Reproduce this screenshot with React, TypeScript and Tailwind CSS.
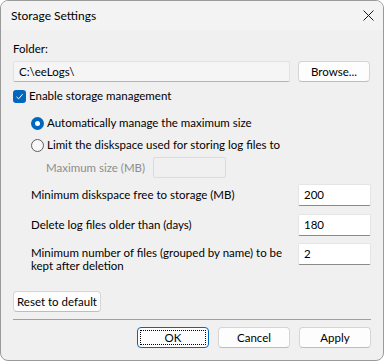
import { useState } from "react";

const font = { fontFamily: 'Lato, "Noto Sans", sans-serif' };

function Button({ label, focus, className }: { label: string; focus?: boolean; className?: string }) {
    return (
        <button
            className={`h-[21px] shrink-0 whitespace-nowrap rounded-[4px] bg-[#fdfdfd] text-[11.5px] leading-none text-black flex items-center justify-center ${focus ? "border border-[#0067c0]" : "border border-[#d5d5d5] border-b-[#bdbdbd]"} ${className ?? ""}`}
        >
            {focus ? (
                <span className="flex items-center justify-center w-[calc(100%-4px)] h-[calc(100%-4px)] border border-dotted border-black">{label}</span>
            ) : (
                label
            )}
        </button>
    );
}

function NumberBox({ value }: { value: string }) {
    return (
        <div className="w-[73px] h-[22px] shrink-0 bg-white border border-[#e5e5e5] border-b-[#8a8a8a] rounded-[2px] flex items-center pl-[5px]">
            {value}
        </div>
    );
}

export default function App() {
    const [enabled, setEnabled] = useState(true);
    const [mode, setMode] = useState<"auto" | "limit">("auto");

    return (
        <div className="w-[385px] h-[362px] bg-white" style={font}>
            <div className="w-[384px] h-[361px] rounded-[8px] border border-[#9a9a9a] bg-[#f0f0f0] overflow-hidden flex flex-col text-[11.5px] text-black whitespace-nowrap">
                {/* title bar */}
                <div className="h-[29px] shrink-0 bg-[#f3f3f3] flex items-center justify-between pl-[10px] pr-[9px]">
                    <span className="text-[12px]">Storage Settings</span>
                    <svg width="11" height="11" viewBox="0 0 11 11">
                        <path d="M0.5 0.5 L10.5 10.5 M10.5 0.5 L0.5 10.5" stroke="#1a1a1a" strokeWidth="1" />
                    </svg>
                </div>

                <div className="flex flex-col px-[12px]">
                    <div className="mt-[11px] h-[16px] leading-[16px]">Folder:</div>

                    <div className="mt-[4px] flex items-center gap-[8px]">
                        <div className="w-[277px] h-[21px] bg-[#f5f5f5] border border-[#e2e2e2] border-b-[#b5b5b5] rounded-[2px] flex items-center pl-[5px]">
                            C:\eeLogs\
                        </div>
                        <Button label="Browse..." className="w-[72px]" />
                    </div>

                    <label className="mt-[7px] flex items-center gap-[3px] h-[14px] cursor-pointer" onClick={() => setEnabled(!enabled)}>
                        <span className={`w-[13px] h-[13px] shrink-0 rounded-[3px] flex items-center justify-center ${enabled ? "bg-[#0067c0]" : "border border-[#777]"}`}>
                            {enabled && (
                                <svg width="9" height="9" viewBox="0 0 9 9">
                                    <path d="M1.5 4.8 L3.6 6.8 L7.6 2.2" stroke="white" strokeWidth="1" fill="none" />
                                </svg>
                            )}
                        </span>
                        <span>Enable storage management</span>
                    </label>

                    <div className="pl-[18px] flex flex-col">
                        <label className="mt-[13px] flex items-center gap-[3px] h-[14px]" onClick={() => setMode("auto")}>
                            <span className={`w-[13px] h-[13px] shrink-0 rounded-full flex items-center justify-center ${mode === "auto" ? "bg-[#0067c0]" : "border border-[#5e5e5e] bg-[#f7f7f7]"}`}>
                                {mode === "auto" && <span className="w-[5px] h-[5px] rounded-full bg-white" />}
                            </span>
                            <span>Automatically manage the maximum size</span>
                        </label>
                        <label className="mt-[8px] flex items-center gap-[3px] h-[14px]" onClick={() => setMode("limit")}>
                            <span className={`w-[13px] h-[13px] shrink-0 rounded-full flex items-center justify-center ${mode === "limit" ? "bg-[#0067c0]" : "border border-[#5e5e5e] bg-[#f7f7f7]"}`}>
                                {mode === "limit" && <span className="w-[5px] h-[5px] rounded-full bg-white" />}
                            </span>
                            <span>Limit the diskspace used for storing log files to</span>
                        </label>
                        <div className="mt-[5px] pl-[15px] flex items-center">
                            <span className="text-[#8d8d8d] w-[107px]">Maximum size (MB)</span>
                            <div className="w-[73px] h-[21px] border border-[#dcdcdc] bg-[#f0f0f0] rounded-[2px]" />
                        </div>
                    </div>

                    <div className="pl-[18px] flex flex-col">
                        <div className="mt-[6px] flex items-center justify-between">
                            <span>Minimum diskspace free to storage (MB)</span>
                            <NumberBox value="200" />
                        </div>
                        <div className="mt-[8px] flex items-center justify-between">
                            <span>Delete log files older than (days)</span>
                            <NumberBox value="180" />
                        </div>
                        <div className="mt-[7px] flex items-start justify-between">
                            <span className="leading-[13px] mt-[3px] flex flex-col">
                                <span>Minimum number of files (grouped by name) to be</span>
                                <span>kept after deletion</span>
                            </span>
                            <NumberBox value="2" />
                        </div>
                    </div>

                    <div className="mt-[19px]">
                        <Button label="Reset to default" className="w-[88px]" />
                    </div>

                    <div className="mt-[7px] h-[1px] bg-[#a0a0a0]" />

                    <div className="mt-[7px] flex justify-end gap-[9px]">
                        <Button label="OK" focus className="w-[72px]" />
                        <Button label="Cancel" className="w-[72px]" />
                        <Button label="Apply" className="w-[72px]" />
                    </div>
                </div>
            </div>
        </div>
    );
}
